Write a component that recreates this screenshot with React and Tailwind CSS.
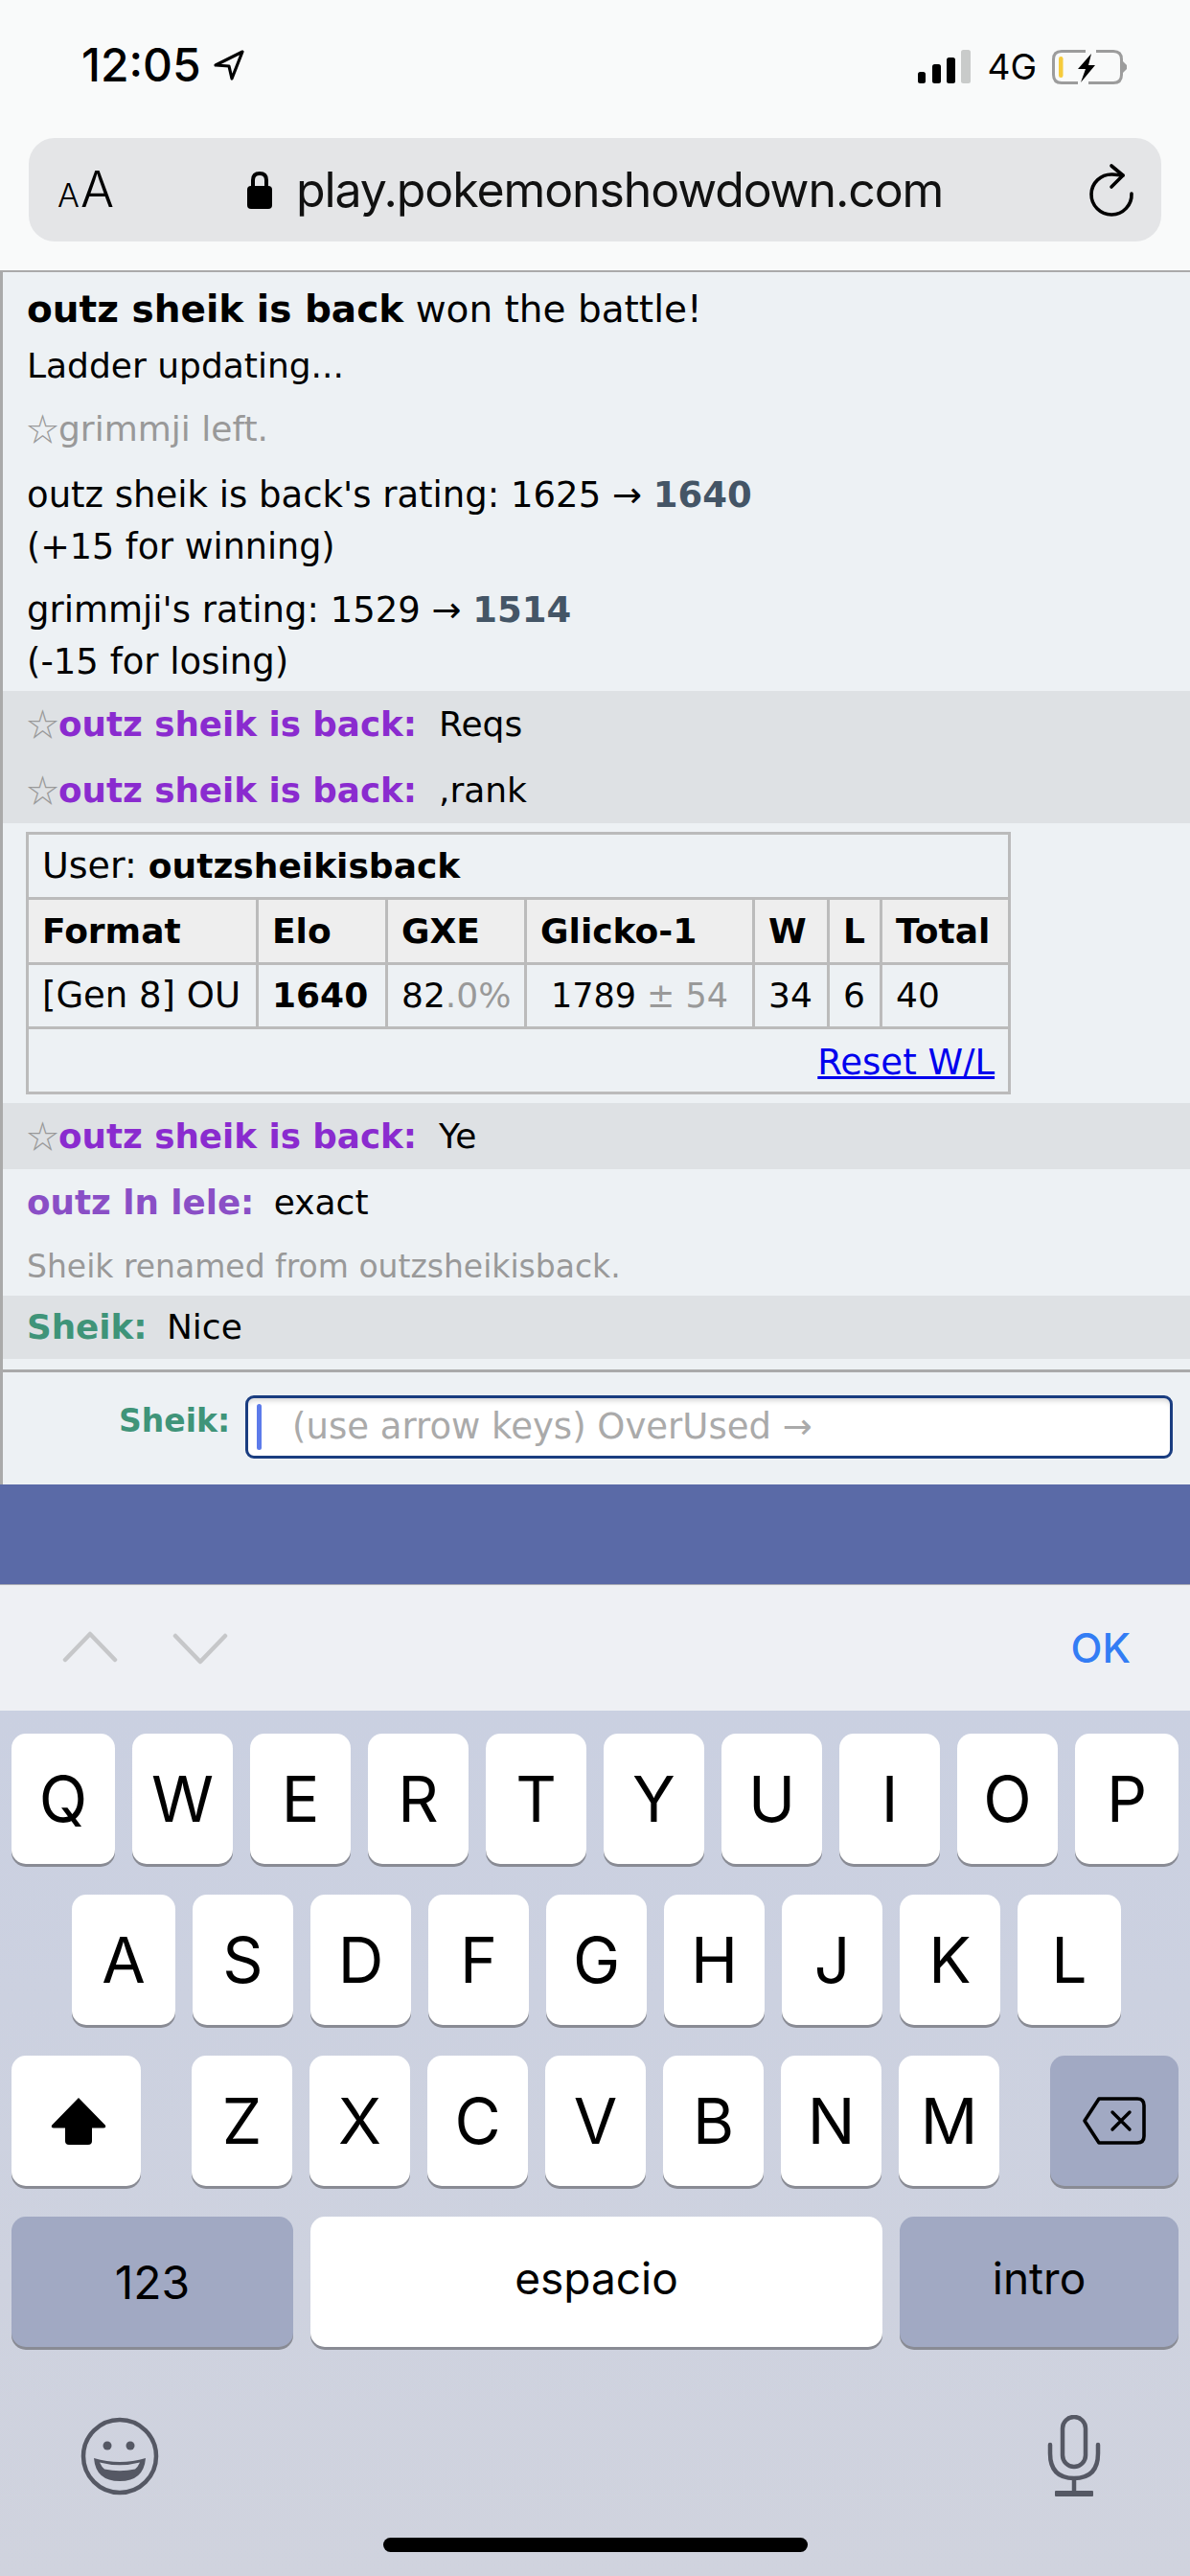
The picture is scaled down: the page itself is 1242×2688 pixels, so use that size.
const SANS = "font-['DejaVu_Sans',sans-serif]";

function Battery() {
  return (
    <svg width="80" height="38" viewBox="0 0 80 38" className="ml-[15px]">
      <path d="M36 2.5 H11 Q2.5 2.5 2.5 11 V27 Q2.5 35.5 11 35.5 H28 M39 35.5 H65 Q73.5 35.5 73.5 27 V11 Q73.5 2.5 65 2.5 H47" fill="none" stroke="#9c9c9c" strokeWidth="3" />
      <rect x="8" y="8" width="4.5" height="22" rx="2.2" fill="#f6cb3c" />
      <path d="M42 5 L28 21 H36 L31 35 L46 17 H39 Z" fill="#000" />
      <path d="M75 13 L79 17 V21 L75 25 Z" fill="#9c9c9c" />
    </svg>
  );
}

function StatusBar() {
  return (
    <div className="flex h-[144px] items-start justify-between pt-[42px] pl-[85px] pr-[65px]">
      <div className="flex items-center">
        <span className="font-['Inter',sans-serif] text-[48px] leading-[52px] font-medium text-black">12:05</span>
        <svg width="34" height="34" viewBox="0 0 34 34" className="ml-[12px]">
          <path d="M31 3 L3 17 L17 18 L20 31 Z" fill="none" stroke="#000" strokeWidth="3.2" strokeLinejoin="round" />
        </svg>
      </div>
      <div className="flex items-center pt-[6px]">
        <svg width="56" height="36" viewBox="0 0 56 36">
          <rect x="0" y="23" width="8" height="12" rx="2.5" fill="#000" />
          <rect x="15" y="15" width="9" height="20" rx="2.5" fill="#000" />
          <rect x="30" y="8" width="9" height="27" rx="2.5" fill="#000" />
          <rect x="45" y="0" width="10" height="35" rx="2.5" fill="#c9cbca" />
        </svg>
        <span className="ml-[16px] font-['Inter',sans-serif] text-[37px] leading-[44px] text-black">4G</span>
        <Battery />
      </div>
    </div>
  );
}

function UrlBar() {
  return (
    <div className="mx-[30px] flex h-[108px] items-center rounded-[27px] bg-[#e4e5e7]">
      <span className="ml-[30px] flex items-baseline font-['Inter',sans-serif] font-light text-black leading-none">
        <span className="text-[34px]">A</span>
        <span className="text-[52px] ml-[1px]">A</span>
      </span>
      <svg width="28" height="40" viewBox="0 0 28 40" className="ml-[138px]">
        <path d="M7 18 V10 Q7 3 14 3 Q21 3 21 10 V18" fill="none" stroke="#000" strokeWidth="4" />
        <rect x="1" y="16" width="26" height="24" rx="4" fill="#000" />
      </svg>
      <span className="ml-[24px] font-['Inter',sans-serif] text-[50px] leading-[60px] text-[#111] tracking-[-1.1px]">play.pokemonshowdown.com</span>
      <svg width="54" height="60" viewBox="0 0 54 60" className="ml-auto mr-[23px]">
        <path d="M46 34 A21 21 0 1 1 26 14 L37 15" fill="none" stroke="#000" strokeWidth="3.6" strokeLinecap="round" />
        <path d="M25 5 L37 15 L25 27" fill="none" stroke="#000" strokeWidth="3.6" strokeLinecap="round" strokeLinejoin="round" />
      </svg>
    </div>
  );
}

function Star() {
  return <span className="font-['Noto_Sans_CJK_JP',sans-serif] text-[33px] leading-none text-[#999]">☆</span>;
}

function ChatRow({ gray, height, children }) {
  return (
    <div className={`flex items-center pl-[25px] whitespace-pre text-[36px] text-black ${gray ? "bg-[#dee1e4]" : ""} ${height}`}>
      <div>{children}</div>
    </div>
  );
}

function RatingTable() {
  const th = "border-[3px] border-[#bbb] bg-[#eee] px-[14px] text-left font-bold";
  const td = "border-[3px] border-[#bbb] px-[14px]";
  return (
    <table className="ml-[24px] my-[9px] w-[1025px] table-fixed border-collapse text-[36px] text-black">
      <colgroup>
        <col className="w-[240px]" />
        <col className="w-[135px]" />
        <col className="w-[145px]" />
        <col className="w-[238px]" />
        <col className="w-[78px]" />
        <col className="w-[55px]" />
        <col className="w-[134px]" />
      </colgroup>
      <tbody>
        <tr className="h-[68px]">
          <td colSpan={7} className={td}><span className="text-[38px]">User: </span><strong>outzsheikisback</strong></td>
        </tr>
        <tr className="h-[68px]">
          <th className={th}>Format</th>
          <th className={th}>Elo</th>
          <th className={th}>GXE</th>
          <th className={th}>Glicko-1</th>
          <th className={th}>W</th>
          <th className={th}>L</th>
          <th className={th}>Total</th>
        </tr>
        <tr className="h-[67px]">
          <td className={`${td} whitespace-nowrap text-[37px]`}>[Gen 8] OU</td>
          <td className={`${td} font-bold`}>1640</td>
          <td className={td}>82<span className="text-[#999]">.0%</span></td>
          <td className={`${td} text-center text-[35px]`}>1789 <span className="text-[#999]">± 54</span></td>
          <td className={td}>34</td>
          <td className={td}>6</td>
          <td className={td}>40</td>
        </tr>
        <tr className="h-[68px]">
          <td colSpan={7} className={`${td} pt-[4px] text-right text-[37px]`}>
            <a className="text-[#0000ee] underline">Reset W/L</a>
          </td>
        </tr>
      </tbody>
    </table>
  );
}

function Chat() {
  const purple = "text-[35.7px] font-bold text-[#8a2bcf]";
  return (
    <div className={`border-l-[3px] border-t-[2px] border-[#aaa] bg-[#edf1f4] ${SANS}`}>
      <div className="h-[437px] pt-[12px] pl-[25px] text-[36px] leading-[54px] text-black">
        <div className="text-[39px]"><strong>outz sheik is back</strong> won the battle!</div>
        <div className="mt-[5px]">Ladder updating...</div>
        <div className="mt-[12px] text-[#999]"><Star />grimmji left.</div>
        <div className="mt-[15px] text-[37px]">outz sheik is back's rating: 1625 → <strong className="text-[#456]">1640</strong></div>
        <div className="text-[36.5px]">(+15 for winning)</div>
        <div className="mt-[12px] text-[37px]">grimmji's rating: 1529 → <strong className="text-[#456]">1514</strong></div>
        <div className="text-[37px]">(-15 for losing)</div>
      </div>
      <ChatRow gray height="h-[69px]"><Star /><span className={purple}>outz sheik is back:</span>{"  "}Reqs</ChatRow>
      <ChatRow gray height="h-[69px]"><Star /><span className={purple}>outz sheik is back:</span>{"  "},rank</ChatRow>
      <RatingTable />
      <ChatRow gray height="h-[69px]"><Star /><span className={purple}>outz sheik is back:</span>{"  "}Ye</ChatRow>
      <ChatRow height="h-[70px]"><span className="text-[35.7px] font-bold text-[#8a4fc6]">outz ln lele:</span><span className="text-[32px]">{"  "}</span>exact</ChatRow>
      <ChatRow height="h-[62px]"><span className="text-[33px] text-[#999]">Sheik renamed from outzsheikisback.</span></ChatRow>
      <ChatRow gray height="h-[66px]"><span className="text-[35.7px] font-bold text-[#3f9479]">Sheik:</span><span className="text-[32px]">{"  "}</span>Nice</ChatRow>
      <div className="h-[11px]" />
    </div>
  );
}

function Composer() {
  return (
    <div className={`flex h-[120px] items-start border-l-[3px] border-t-[3px] border-[#aaa] bg-[#edf1f4] pt-[24px] pl-[121px] ${SANS}`}>
      <span className="mr-[16px] mt-[5px] text-[33px] leading-[44px] font-bold text-[#3f9479]">Sheik:</span>
      <div className="flex h-[66px] w-[968px] items-center rounded-[9px] border-[3px] border-[#1a3d80] bg-white pl-[9px] shadow-[inset_0_6px_5px_-3px_rgba(0,0,0,0.15)]">
        <span className="h-[48px] w-[5px] rounded-full bg-[#5d7bea]" />
        <span className="ml-[32px] text-[37px] text-[#aaa]">(use arrow keys) OverUsed →</span>
      </div>
    </div>
  );
}

function Chevron({ up }) {
  return (
    <svg width="58" height="36" viewBox="0 0 58 36">
      <path d={up ? "M3 32 L29 5 L55 32" : "M3 4 L29 31 L55 4"} fill="none" stroke="#c6c7c9" strokeWidth="4.5" strokeLinecap="round" strokeLinejoin="round" />
    </svg>
  );
}

function Toolbar() {
  return (
    <div className="flex h-[132px] items-center border-t-[1px] border-[#a9acb6] bg-[#eef0f4] pl-[65px] pr-[62px]">
      <div className="mb-[3px]"><Chevron up /></div>
      <div className="ml-[57px] mt-[3px]"><Chevron /></div>
      <span className="ml-auto font-['Inter',sans-serif] text-[43px] font-medium text-[#337df4]">OK</span>
    </div>
  );
}

function Key({ label, width = "w-[105px]" }) {
  return (
    <div className={`flex h-[136px] ${width} items-center justify-center rounded-[15px] bg-white text-[66px] text-black shadow-[0_3px_0_0_#898b94]`}>
      {label}
    </div>
  );
}

function GrayKey({ width, children }) {
  return (
    <div className={`flex h-[136px] ${width} items-center justify-center rounded-[15px] bg-[#a1a9c3] text-black shadow-[0_3px_0_0_#898b94]`}>
      {children}
    </div>
  );
}

function Keyboard() {
  const row3 = ["Z", "X", "C", "V", "B", "N", "M"];
  const row1 = ["W", "E", "R", "T", "Y", "U", "I", "O"];
  const row2 = ["S", "D", "F", "G", "H", "J", "K"];
  return (
    <div className="bg-gradient-to-b from-[#cad0e1] to-[#d0d3de] pt-[24px] px-[12px] h-[903px] font-['Inter',sans-serif]">
      <div className="flex gap-[18px]">
        <Key label="Q" width="w-[108px]" />
        {row1.map((k) => <Key key={k} label={k} />)}
        <Key label="P" width="w-[108px]" />
      </div>
      <div className="mt-[32px] flex gap-[18px] pl-[63px]">
        <Key label="A" width="w-[108px]" />
        {row2.map((k) => <Key key={k} label={k} />)}
        <Key label="L" width="w-[108px]" />
      </div>
      <div className="mt-[32px] flex justify-between">
        <div className="flex h-[136px] w-[135px] items-center justify-center rounded-[15px] bg-white pl-[5px] shadow-[0_3px_0_0_#898b94]">
          <svg width="58" height="50" viewBox="0 0 58 54" preserveAspectRatio="none">
            <path d="M29 1 L57 32 Q58 35 55 35 H43 V50 Q43 54 39 54 H19 Q15 54 15 50 V35 H3 Q0 35 1 32 Z" fill="#000" />
          </svg>
        </div>
        <div className="flex gap-[18px]">
          {row3.map((k) => <Key key={k} label={k} />)}
        </div>
        <GrayKey width="w-[134px]">
          <svg width="68" height="52" viewBox="0 0 68 52">
            <path d="M18 3 H58 Q65 3 65 10 V42 Q65 49 58 49 H18 L3 26 Z" fill="none" stroke="#000" strokeWidth="3.6" strokeLinejoin="round" />
            <path d="M32 17 L50 35 M50 17 L32 35" stroke="#000" strokeWidth="3.4" strokeLinecap="round" />
          </svg>
        </GrayKey>
      </div>
      <div className="mt-[32px] flex gap-[18px]">
        <GrayKey width="w-[294px]"><span className="pt-[2px] text-[48px]">123</span></GrayKey>
        <div className="flex h-[136px] w-[597px] items-center justify-center rounded-[15px] bg-white pb-[7px] text-[46px] text-black shadow-[0_3px_0_0_#898b94]">espacio</div>
        <GrayKey width="w-[291px]"><span className="pb-[7px] text-[46px]">intro</span></GrayKey>
      </div>
      <div className="mt-[71px] flex items-center justify-between pl-[72px] pr-[81px]">
        <svg width="82" height="82" viewBox="0 0 82 82">
          <circle cx="41" cy="41" r="38" fill="none" stroke="#555864" strokeWidth="4.5" />
          <circle cx="28" cy="30" r="4.5" fill="#555864" />
          <circle cx="52" cy="30" r="4.5" fill="#555864" />
          <path d="M14 43 Q41 51 68 43 Q66 67 41 67 Q16 67 14 43 Z" fill="#555864" />
          <path d="M20 47.5 Q41 53 62 47.5 Q60 52 57 54.5 Q41 58 25 54.5 Q22 52 20 47.5 Z" fill="#d0d3de" />
        </svg>
        <svg width="56" height="86" viewBox="0 0 56 86">
          <rect x="16" y="2" width="24" height="52" rx="12" fill="none" stroke="#555864" strokeWidth="4.5" />
          <path d="M3 31 V40 Q3 66 28 66 Q53 66 53 40 V31" fill="none" stroke="#555864" strokeWidth="4.5" strokeLinecap="round" />
          <path d="M28 66 V80" stroke="#555864" strokeWidth="4.5" />
          <rect x="8" y="79" width="40" height="6" rx="1" fill="#555864" />
        </svg>
      </div>
      <div className="mx-auto mt-[42px] h-[15px] w-[443px] rounded-full bg-black" />
    </div>
  );
}

export default function App() {
  return (
    <div className="h-[2688px] w-[1242px] overflow-hidden bg-[#f9fafa]">
      <StatusBar />
      <UrlBar />
      <div className="h-[30px]" />
      <Chat />
      <Composer />
      <div className="h-[104px] bg-[#5a6aa7]" />
      <Toolbar />
      <Keyboard />
    </div>
  );
}
